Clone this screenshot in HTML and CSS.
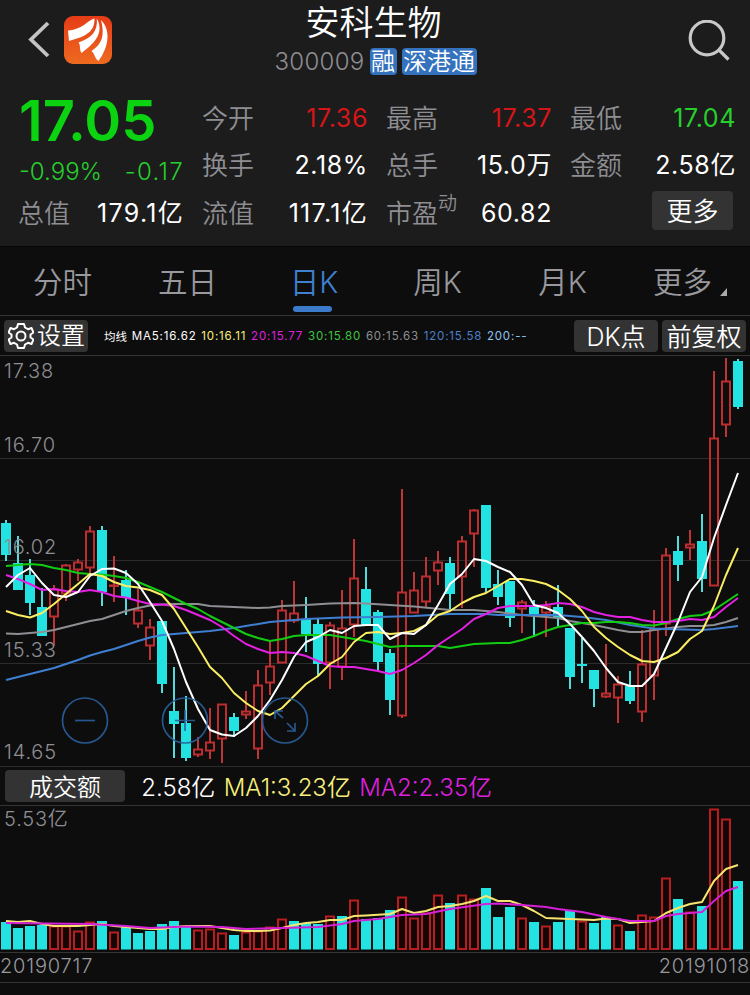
FILE: index.html
```html
<!DOCTYPE html>
<html lang="zh-CN">
<head>
    <meta charset="UTF-8">
    <title>安科生物 300009</title>
    <link rel="stylesheet" href="styles.css">
</head>
<body>
    <header class="header">
        <div class="title-bar">
            <div class="title-left">
                <svg class="back" width="22" height="38" viewBox="0 0 22 38"><path d="M20 2 L3 18.500 L20 35" /></svg>
                <svg class="logo" width="48" height="48" viewBox="0 0 48 48">
                    <defs>
                        <linearGradient id="logoBg" x1="0" y1="0" x2="0" y2="1">
                            <stop offset="0" stop-color="#e63c17" />
                            <stop offset="1" stop-color="#ee6a20" />
                        </linearGradient>
                    </defs>
                    <rect width="48" height="48" rx="9" fill="url(#logoBg)" />
                    <path d="M30.500 2.500 C22 5 20 13 4 14.500 L5 25 C18 21 31 18 30.500 2.500 Z" />
                    <path d="M32.800 2.500 C34 16 27 22 14.500 26.500 C17 30 15 33 17.500 37 C28 29 41.500 18 32.800 2.500 Z" />
                    <path d="M37 4 C41 20 38 28 27.500 35 C31 38 31 43 34.500 45 C45 31 47 14 37 4 Z" />
                </svg>
            </div>
            <div class="title">
                <h1>安科生物</h1>
                <div class="code"><span>300009</span><b>融</b><b class="wide">深港通</b></div>
            </div>
            <svg class="search" width="42" height="42" viewBox="0 0 42 42"><circle cx="19" cy="18" r="16.800" /><path d="M31 30 L40.500 39.500" /></svg>
        </div>
        <div class="quote">
            <div class="price-box">
                <div class="price">17.05</div>
                <div class="change"><span>-0.99%</span><span class="diff">-0.17</span></div>
            </div>
            <div class="item"><label>今开</label><span class="red">17.36</span></div>
            <div class="item"><label>最高</label><span class="red">17.37</span></div>
            <div class="item"><label>最低</label><span class="green">17.04</span></div>
            <div class="item"><label>换手</label><span>2.18%</span></div>
            <div class="item"><label>总手</label><span>15.0万</span></div>
            <div class="item"><label>金额</label><span>2.58亿</span></div>
            <div class="item"><label>总值</label><span class="loose">179.1亿</span></div>
            <div class="item"><label>流值</label><span class="loose">117.1亿</span></div>
            <div class="item"><label>市盈<sup>动</sup></label><span>60.82</span></div>
            <div class="item end"><button class="btn more-btn">更多</button></div>
        </div>
    </header>

    <nav class="tabs">
        <a>分时</a>
        <a>五日</a>
        <a class="active">日K</a>
        <a>周K</a>
        <a>月K</a>
        <a class="more">更多</a>
    </nav>

    <div class="toolbar">
        <button class="btn setting">
            <svg width="26" height="28" viewBox="-13 -14 26 28">
                <path d="M-3 -12 H3 L4 -8.500 L7 -6.800 L10.500 -8 L12.500 -3.500 L9.500 -1.500 V1.500 L12.500 3.500 L10.500 8 L7 6.800 L4 8.500 L3 12 H-3 L-4 8.500 L-7 6.800 L-10.500 8 L-12.500 3.500 L-9.500 1.500 V-1.500 L-12.500 -3.500 L-10.500 -8 L-7 -6.800 L-4 -8.500 Z" />
                <circle r="4.500" />
            </svg>
            <span>设置</span>
        </button>
        <div class="ma-list">
            <span class="ma-name">均线</span>
            <span>MA5:16.62</span>
            <span class="yellow">10:16.11</span>
            <span class="magenta">20:15.77</span>
            <span class="ma30">30:15.80</span>
            <span class="gray">60:15.63</span>
            <span class="blue">120:15.58</span>
            <span class="sky">200:--</span>
        </div>
        <button class="btn tool-btn">DK点</button>
        <button class="btn tool-btn">前复权</button>
    </div>

    <svg class="k-chart" id="kChart" width="750" height="411" viewBox="0 356 750 411"></svg>

    <div class="volume-head">
        <button class="btn volume-btn">成交额</button>
        <span>2.58亿</span>
        <span class="yellow">MA1:3.23亿</span>
        <span class="magenta">MA2:2.35亿</span>
    </div>

    <svg class="v-chart" id="vChart" width="750" height="146" viewBox="0 806 750 146"></svg>

    <footer class="dates"><span>20190717</span><span>20191018</span></footer>

    <script src="script.js"></script>
</body>
</html>
```
FILE: styles.css
```css
* {
    margin: 0;
    padding: 0;
    box-sizing: border-box;
}

body {
    width: 750px;
    height: 995px;
    overflow: hidden;
    background: #0d0d0d;
    color: #fff;
    font-family: Inter, "Noto Sans CJK SC", sans-serif;
    font-weight: 350;
}

svg {
    display: block;
}

.header {
    height: 246px;
    background: #1c1c1c;
}

.title-bar {
    height: 94px;
    display: grid;
    grid-template-columns: 1fr auto 1fr;
    padding: 0 20px 0 28px;
}

.title-left {
    display: flex;
    gap: 14px;
}

.back {
    margin-top: 21px;
    fill: none;
    stroke: #c4c4c4;
    stroke-width: 3.8;
}

.logo {
    margin-top: 16px;
    fill: #fff;
}

.title {
    display: flex;
    flex-direction: column;
    align-items: center;
}

.title h1 {
    height: 48px;
    line-height: 45px;
    margin-left: -11px;
    font-size: 34px;
    font-weight: 350;
}

.code {
    display: flex;
    align-items: center;
    gap: 5px;
    height: 27px;
    margin-left: -7px;
    font-size: 24px;
    color: #8e8e93;
}

.code span {
    letter-spacing: 0.3px;
}

.code b {
    width: 27px;
    height: 27px;
    line-height: 28px;
    border-radius: 4px;
    background: #3572bd;
    color: #fff;
    font-size: 24px;
    font-weight: 350;
    text-align: center;
}

.code .wide {
    width: 75px;
}

.search {
    margin: 20px 0 0 auto;
    fill: none;
    stroke: #c8c8c8;
    stroke-width: 3.2;
}

.quote {
    display: grid;
    grid-template-columns: repeat(4, 165px);
    grid-auto-rows: 47.500px;
    column-gap: 19px;
    padding-left: 19px;
}

.price-box {
    grid-row: span 2;
    color: #0bd312;
}

.price {
    height: 63px;
    line-height: 54px;
    font-size: 56px;
    font-weight: 600;
}

.change {
    display: flex;
    justify-content: space-between;
    line-height: 29px;
    font-size: 24px;
    color: #27cf2d;
}

.diff {
    letter-spacing: 1.3px;
}

.item {
    display: flex;
    justify-content: space-between;
    align-items: center;
    padding-top: 1px;
    font-size: 25px;
    line-height: 47px;
    white-space: nowrap;
}

.item span {
    font-weight: 380;
    letter-spacing: 0.6px;
}

.item .loose {
    letter-spacing: 1.3px;
}

.item label {
    margin-left: -1px;
    color: #8e8e93;
    font-size: 26px;
}

.item sup {
    font-size: 19px;
    line-height: 1;
    vertical-align: 13px;
}

.item.end {
    justify-content: flex-end;
}

.red {
    color: #d61518;
}

.green {
    color: #27cf2d;
}

.yellow {
    color: #f8f07c;
}

.magenta {
    color: #df20df;
}

.ma30 {
    color: #3fc63f;
}

.gray {
    color: #8e8e93;
}

.blue {
    color: #4c80cb;
}

.sky {
    color: #8dc4ee;
}

.btn {
    border: none;
    border-radius: 4px;
    background: #333;
    color: #fff;
    font-family: inherit;
    font-size: 25px;
    font-weight: 350;
    white-space: nowrap;
}

.more-btn {
    width: 81px;
    height: 39px;
    line-height: 41px;
    margin: -5px 3px 0 0;
    font-size: 26px;
}

.tabs {
    display: flex;
    height: 70px;
    border-top: 1px solid #060606;
    border-bottom: 1px solid #343434;
}

.tabs a {
    position: relative;
    width: 125px;
    line-height: 70px;
    text-align: center;
    font-size: 29.500px;
    color: #98989d;
}

.tabs .active {
    padding-left: 3px;
    color: #3f80cf;
}

.tabs .active::after {
    content: "";
    position: absolute;
    left: 43px;
    bottom: 3px;
    width: 39px;
    height: 6px;
    border-radius: 3px;
    background: #3b7bca;
}

.tabs .more {
    padding-right: 10px;
}

.tabs .more::after {
    content: "";
    position: absolute;
    right: 23px;
    bottom: 19px;
    border-left: 7px solid transparent;
    border-bottom: 8px solid #aaa;
}

.toolbar {
    display: flex;
    align-items: center;
    gap: 4px;
    height: 40px;
    padding: 0 4px;
    border-bottom: 1px solid #343434;
}

.toolbar .btn {
    height: 32px;
    line-height: 34px;
}

.setting {
    display: flex;
    align-items: center;
    gap: 3px;
    width: 84px;
    padding-left: 4px;
}

.setting span {
    font-size: 24px;
}

.setting svg {
    fill: none;
    stroke: #fff;
    stroke-width: 2;
    stroke-linejoin: round;
}

.ma-list {
    flex: 1;
    display: flex;
    gap: 4.700px;
    padding: 2px 0 0 12px;
    font-size: 11.500px;
    font-weight: 400;
    letter-spacing: 0.85px;
    white-space: nowrap;
}

.ma-name {
    margin-top: -1px;
    letter-spacing: 0;
}

.tool-btn {
    width: 84px;
}

.volume-head {
    display: flex;
    align-items: center;
    gap: 8.300px;
    height: 39px;
    padding-left: 5px;
    border-bottom: 1px solid #343434;
    line-height: 36px;
    font-size: 24px;
}

.volume-head > span {
    margin-top: 3px;
}

.volume-btn {
    width: 120px;
    height: 32px;
    line-height: 35px;
    margin-right: 8px;
    font-size: 24px;
}

.dates {
    display: flex;
    justify-content: space-between;
    height: 31px;
    line-height: 27px;
    border-top: 1px solid #343434;
    border-bottom: 1px solid #343434;
    font-size: 20px;
    letter-spacing: 0.8px;
    color: #98989d;
}

.grid-line {
    stroke: #2c2c2c;
}

.axis {
    font-size: 20px;
    letter-spacing: 0.8px;
    fill: #8e8e93;
}

.up {
    fill: none;
    stroke: #bd2d2f;
    stroke-width: 2;
}

.down {
    fill: #23e2e2;
}

.wick-up {
    stroke: #bd3637;
    stroke-width: 2;
}

.wick-down {
    stroke: #55dbdc;
    stroke-width: 2;
}

.vol-up {
    fill: #150505;
    stroke: #b81e20;
    stroke-width: 2;
}

.line {
    fill: none;
    stroke-width: 2;
    stroke-linejoin: round;
}

.control {
    fill: none;
    stroke: #29609c;
    stroke-width: 1.7;
    opacity: 0.9;
}
```
FILE: script.js
```js
// [type, high, body top, body bottom, low]
const candles = [
    ["d",520,523,555,561],["d",536,563,590,590],["d",559,575,603,615],["d",588,607,636,636],
    ["u",585,589,617,646],["u",564,565,594,601],["u",559,562,570,581],["u",526,531,568,574],
    ["d",526,530,592,606],["u",556,585,586,602],["d",570,580,598,615],["u",589,610,624,628],
    ["u",619,627,646,660],["d",621,621,684,693],["d",667,711,724,758],["d",696,723,758,761],
    ["u",737,749,755,757],["u",708,742,751,759],["u",704,704,739,763],["d",713,717,731,737],
    ["u",691,711,715,719],["u",670,685,749,759],["u",642,666,683,695],["u",600,610,663,663],
    ["u",581,613,621,623],["d",597,619,634,652],["d",618,624,664,676],["u",622,625,663,689],
    ["u",590,628,667,680],["u",539,578,625,637],["d",567,589,625,625],["d",610,612,662,671],
    ["d",649,653,700,715],["u",489,592,716,718],["u",572,590,613,613],["u",557,576,602,608],
    ["u",551,562,571,585],["d",557,563,594,610],["u",536,541,577,608],["u",509,510,534,567],
    ["d",505,505,588,592],["d",570,584,597,605],["d",581,581,618,627],["u",600,602,609,633],
    ["d",600,605,616,637],["u",601,606,613,637],["d",585,607,618,627],["d",628,628,677,689],
    ["d",638,664,666,683],["d",670,670,689,707],["u",644,693,697,698],["u",676,684,698,723],
    ["d",671,686,701,704],["u",630,664,712,722],["u",610,629,676,700],["u",548,555,624,636],
    ["d",536,551,565,581],["u",530,544,548,560],["d",514,541,579,592],["u",371,438,586,586],
    ["u",358,381,425,437],["d",359,361,407,409]
];

const volumes = [
    922,928,926,925,926,926,931,922,921,932,927,933,931,924,921,927,930,929,933,935,
    932,931,927,919,921,923,924,916,916,900,919,918,910,897,918,913,895,903,895,899,
    888,917,907,918,922,926,922,911,921,923,917,925,931,915,917,878,899,912,906,809,819,881
];
const volumeDown = [0,1,2,3,8,10,11,12,13,14,15,19,24,25,26,28,30,31,32,37,40,41,42,44,46,47,49,50,52,56,58,61];

const kLines = {
    "#8e8e93": "6,633.5 18,634 30,633 42,632 54,630 66,627 78,624 90,621 102,619 114,615 126,611 138,608 150,605.5 162,604.5 174,604 198,604 210,606 234,607 258,608 270,607.5 282,606 306,605 330,603.5 354,603 366,603.5 390,605 414,606.5 450,610 474,610 498,612 522,615 546,617 558,618 570,621 594,625 618,630 630,632 642,632 654,630 678,627 690,626 702,626 714,625 726,622 738,618",
    "#3f7fd2": "6,680 30,674 42,671 54,668 66,664 78,660 90,655.5 102,652 114,649 126,645 138,641 150,637.5 162,635 174,634 198,632 210,631 234,628 270,622 282,621 306,619 342,617.5 378,617 414,616 450,614 486,614 498,615 558,615 582,617 606,620 630,625 654,628.5 666,629 702,630 714,629 738,626",
    "#12cc12": "6,566 18,565 30,564 42,565 54,568 66,570 78,573 90,574 102,574.5 114,576 126,578 138,582 150,587 162,592 174,598 186,604 198,609 210,616 222,622 234,628 246,634 258,638 270,641 282,639 294,636 306,635 330,635 342,637 354,639 366,641 378,644 390,647 402,646 438,646 450,648 462,646 474,644 498,643 510,643 522,640 534,636 546,631 558,627 570,625 582,623 594,623 606,622 618,622 630,623 642,625 654,625.5 666,623 678,619 690,616 702,615 714,610 726,602 738,594",
    "#e321e3": "6,575 18,579 30,584 42,590 54,589 66,591 78,592 90,590 102,592 114,596 126,597.5 138,601 150,604 162,604.5 174,606 186,610 198,615 210,620 222,627 234,636 246,644 258,649 270,653 282,652 294,653 306,656 318,661 330,666 342,667 354,667 366,669 378,671 390,674 402,670 414,663 426,655 438,645 450,637 462,629 474,619 486,614 498,608 510,606 534,606 546,605 558,603 570,604 582,607 594,612 606,615 618,617 630,617 642,620 654,622 666,622 678,621 690,619 702,620 714,617 726,607 738,598",
    "#fbee62": "6,611 18,615 30,617.5 42,613 54,604 66,594 78,584 90,574 102,576 114,582 126,586 138,587.5 150,590 162,595 174,609 186,628 198,647 210,667 222,678 234,693 246,703 258,711 270,715 282,708 294,696 306,684 318,676 330,664 342,657 354,642 366,633 378,632 390,634 402,633 414,631 426,625 438,615 450,611 462,603 474,597 486,593 498,586 510,579 522,579 534,581 546,584 558,590 570,599 582,611 594,627 606,638 618,647 630,655 642,661 654,662 666,658 678,652 690,639 702,631 714,606 726,575 738,548",
    "#ffffff": "6,587 18,575 30,568 42,583 54,595 66,597 78,592 90,576 102,569 114,568.5 126,573 138,584 150,602 162,621 174,649 186,682 198,709 210,730 222,734.5 234,736 246,728 258,716 270,700 282,680 294,657 306,642 318,637 330,630 342,633 354,626 366,625 378,625 390,639 402,633 414,634 426,625 438,605 450,584 462,574 474,559 486,561 498,567 510,572 522,585 534,605 546,608 558,613 570,624 582,637 594,651 606,668 618,682 630,686 642,686 654,674 666,648 678,622 690,592 702,577 714,538 726,505 738,473"
};

const vLines = {
    "#f6e66f": "6,921 18,922 30,921 42,924 54,926 78,926 90,925 102,924 114,926 126,927 150,929 162,929 174,927 186,926 210,926 222,928 234,930 246,931 258,931 270,930.5 282,928 294,925 306,923 318,922 330,920 342,920 354,916 366,915.5 390,914 402,909 414,913 426,911 438,907 450,906 462,904 474,901 486,896 498,901 510,901 522,905 534,911 546,918 570,919 594,920 606,918.5 618,919 630,923 642,922 654,921 666,913 678,908 690,904 702,902 714,881 726,869 738,865",
    "#d420d6": "6,923 90,924 126,926 150,928 186,926.5 222,927 246,929 282,928 318,927 342,924 354,921 378,919 402,915 426,914 450,909 486,904 498,903.5 522,905 546,907 558,909 582,912 606,917 618,919 630,921 654,921 666,916 678,914 702,912 714,901 726,891 738,887"
};

function polylines(lines) {
    return Object.keys(lines).map(c => `<polyline class="line" stroke="${c}" points="${lines[c]}" />`).join("");
}

function drawCandles() {
    let out = "";
    [458.5, 560.5, 663.5, 766.5].forEach(y => {
        out += `<path class="grid-line" d="M0 ${y} H750" />`;
    });
    candles.forEach(([type, high, top, bottom, low], i) => {
        const x = 6 + i * 12;
        if (type === "d") {
            out += `<path class="wick-down" d="M${x} ${high} V${low}" />`;
            out += `<rect class="down" x="${x - 5}" y="${top}" width="10" height="${bottom - top}" />`;
        } else {
            out += `<path class="wick-up" d="M${x} ${high} V${top} M${x} ${bottom} V${low}" />`;
            out += `<rect class="up" x="${x - 4}" y="${top + 0.5}" width="8" height="${Math.max(bottom - top - 1, 0.5)}" />`;
        }
    });
    out += polylines(kLines);
    [["17.38", 378], ["16.70", 452], ["16.02", 554], ["15.33", 657], ["14.65", 759]].forEach(([text, y]) => {
        out += `<text class="axis" x="4" y="${y}">${text}</text>`;
    });
    // zoom out, zoom in, full screen
    out += `<g class="control"><circle cx="85" cy="720.500" r="22.500" /><path d="M75 720.500 H95" />
        <circle cx="185" cy="720.500" r="22.500" /><path d="M175 720.500 H195 M185 710 V731" />
        <circle cx="285" cy="720.500" r="22.500" /><path d="M275 711 L283 718 M287 723 L295 731 M275 719 V711 H283 M287 731 H295 V723" /></g>`;
    document.getElementById("kChart").innerHTML = out;
}

function drawVolumes() {
    let out = "";
    volumes.forEach((top, i) => {
        const x = 6 + i * 12;
        if (volumeDown.includes(i)) {
            out += `<rect class="down" x="${x - 5}" y="${top}" width="10" height="${949.5 - top}" />`;
        } else {
            out += `<rect class="vol-up" x="${x - 4}" y="${top + 0.5}" width="8" height="${948.5 - top}" />`;
        }
    });
    out += polylines(vLines);
    out += `<text class="axis" x="4" y="826">5.53亿</text>`;
    document.getElementById("vChart").innerHTML = out;
}

drawCandles();
drawVolumes();
```
